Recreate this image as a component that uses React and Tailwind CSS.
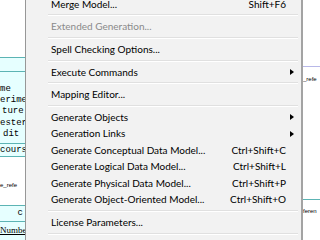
import React from "react";

const items = [
  { label: "Merge Model...", shortcut: "Shift+F6" },
  { sep: true },
  { label: "Extended Generation...", disabled: true },
  { sep: true },
  { label: "Spell Checking Options..." },
  { sep: true },
  { label: "Execute Commands", sub: true },
  { sep: true },
  { label: "Mapping Editor..." },
  { sep: true },
  { label: "Generate Objects", sub: true },
  { label: "Generation Links", sub: true },
  { label: "Generate Conceptual Data Model...", shortcut: "Ctrl+Shift+C" },
  { label: "Generate Logical Data Model...", shortcut: "Ctrl+Shift+L" },
  { label: "Generate Physical Data Model...", shortcut: "Ctrl+Shift+P" },
  { label: "Generate Object-Oriented Model...", shortcut: "Ctrl+Shift+O" },
  { sep: true },
  { label: "License Parameters..." },
  { sep: true },
];

const MenuRow = ({ item }) => {
  if (item.sep) {
    return (
      <div className="h-[6.2px] flex flex-col justify-center ml-[22px] mr-[3px]">
        <div className="h-px bg-[#e0e0e0]" />
        <div className="h-px bg-white" />
      </div>
    );
  }
  return (
    <div
      className={`h-[16.5px] flex items-center pl-[25px] ${
        item.disabled ? "text-[#8a8a8a]" : "text-black"
      }`}
    >
      <span className="flex-1 whitespace-nowrap">{item.label}</span>
      {item.shortcut && <span className="whitespace-nowrap">{item.shortcut}</span>}
      <span className="w-[15px] flex items-center">
        {item.sub && (
          <span className="ml-[4px] w-0 h-0 border-l-[4px] border-l-black border-y-[3px] border-y-transparent" />
        )}
      </span>
    </div>
  );
};

const Line = ({ color = "bg-[#5cb4b4]" }) => <div className={`h-px ${color}`} />;

export default function App() {
  return (
    <div className="relative w-[320px] h-[240px] overflow-hidden bg-white">
      {/* diagram behind the menu */}
      <div className="flex h-full">
        <div
          className="w-[25px] flex flex-col text-[9px] leading-[11px] text-black overflow-hidden"
          style={{ fontFamily: '"Liberation Mono", monospace' }}
        >
          <div className="h-[57px]" />
          <Line />
          <div className="h-[13px] bg-[#e6ffff]" />
          <Line />
          <div className="h-[71px] bg-[#e6ffff] pt-[12px] whitespace-nowrap">
            <div>me</div>
            <div>erime</div>
            <div className="pl-[2px]">ture</div>
            <div className="mt-[1px]">ester</div>
            <div className="pl-[3px]">dit</div>
          </div>
          <Line />
          <div className="h-[12px] bg-[#e6ffff] leading-[12px] whitespace-nowrap">cours</div>
          <Line />
          <div className="h-[48px] flex items-end pb-[16px]">
            <span
              className="text-[6px] leading-[8px] whitespace-nowrap"
              style={{ fontFamily: '"Liberation Sans", sans-serif' }}
            >
              e_refe
            </span>
          </div>
          <Line />
          <div className="h-[15px] bg-[#e6ffff] flex justify-end items-center pr-[2px]">c</div>
          <Line />
          <div className="flex-1 bg-[#e6ffff] pt-[3px]">
            <span className="underline" style={{ fontFamily: '"Liberation Serif", serif' }}>
              Numbe
            </span>
          </div>
        </div>
        <div className="flex-1" />
        <div
          className="w-[17px] flex flex-col text-[6px] leading-[8px] overflow-hidden whitespace-nowrap"
          style={{ fontFamily: '"Liberation Sans", sans-serif' }}
        >
          <div className="h-[66px]" />
          <Line color="bg-[#b8b8e8]" />
          <div className="mt-[8px]">_refe</div>
          <div className="h-[116px]" />
          <Line />
          <div className="mt-[7px]">feren</div>
        </div>
      </div>

      {/* context menu */}
      <div
        className="absolute left-[25px] top-[-4.25px] h-[260px] w-[278px] bg-[#f2f2f2] border-l border-l-[#979797] border-r-2 border-r-[#a3a3a3] text-[10px]"
        style={{ fontFamily: "Lato, sans-serif" }}
      >
        {items.map((item, i) => (
          <MenuRow key={i} item={item} />
        ))}
      </div>
    </div>
  );
}
